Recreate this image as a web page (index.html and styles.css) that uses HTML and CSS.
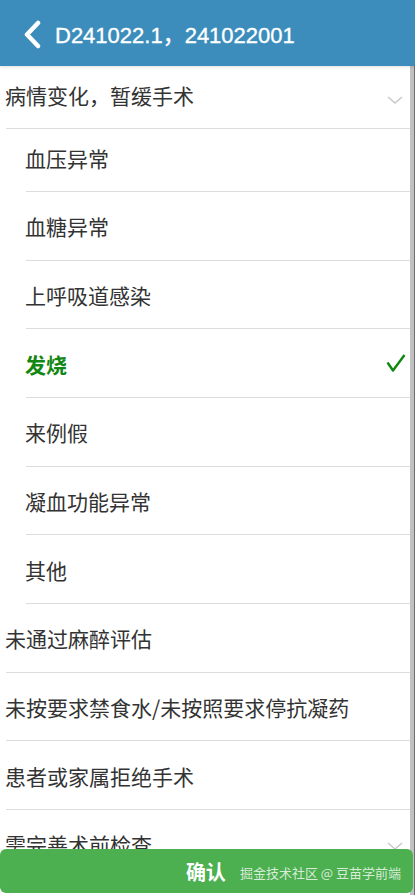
FILE: index.html
```html
<!DOCTYPE html>
<html lang="zh-CN">
<head>
<meta charset="utf-8">
<title>D241022.1，241022001</title>
<link rel="stylesheet" href="styles.css">
</head>
<body>
<header class="topbar">
  <svg class="back" width="20" height="30" viewBox="0 0 20 30"><polyline points="15,4 4,15.5 15,27" fill="none" stroke="#fff" stroke-width="4.5" stroke-linecap="round" stroke-linejoin="round"/></svg>
  <h1 class="title">D241022.1，241022001</h1>
</header>
<div class="content">
  <ul class="list">
    <li class="item group top">
      <span class="label">病情变化，暂缓手术</span>
      <svg class="chev" width="16" height="8" viewBox="0 0 16 8"><polyline points="1,1 8,7 15,1" fill="none" stroke="#c8c8c8" stroke-width="1.5"/></svg>
    </li>
    <li class="item sub short"><span class="label">血压异常</span></li>
    <li class="item sub"><span class="label">血糖异常</span></li>
    <li class="item sub"><span class="label">上呼吸道感染</span></li>
    <li class="item sub selected">
      <span class="label">发烧</span>
      <svg class="check" width="20" height="18" viewBox="0 0 20 18"><path d="M1.5 8.5 L7 16.5 L18.5 1" fill="none" stroke="#118811" stroke-width="2.4" stroke-linejoin="round"/></svg>
    </li>
    <li class="item sub"><span class="label">来例假</span></li>
    <li class="item sub"><span class="label">凝血功能异常</span></li>
    <li class="item sub"><span class="label">其他</span></li>
    <li class="item group"><span class="label">未通过麻醉评估</span></li>
    <li class="item group"><span class="label">未按要求禁食水/未按照要求停抗凝药</span></li>
    <li class="item group"><span class="label">患者或家属拒绝手术</span></li>
    <li class="item group">
      <span class="label">需完善术前检查</span>
      <svg class="chev" width="16" height="8" viewBox="0 0 16 8"><polyline points="1,1 8,7 15,1" fill="none" stroke="#c8c8c8" stroke-width="1.5"/></svg>
    </li>
  </ul>
  <div class="scrolltrack"></div>
</div>
<button class="confirm" type="button"><span class="confirm-text">确认</span><span class="watermark">掘金技术社区 @ 豆苗学前端</span></button>
</body>
</html>
```
FILE: styles.css
```css
html, body {
  margin: 0;
  padding: 0;
  height: 895px;
  overflow: hidden;
  background: #fff;
}
body {
  font-family: "Noto Sans CJK SC", "Noto Sans", sans-serif;
  color: #333;
}
.topbar {
  position: relative;
  z-index: 2;
  height: 66px;
  background: #3c8dbc;
  display: flex;
  align-items: center;
  padding-left: 23px;
  box-sizing: border-box;
  box-shadow: 0 1px 3px rgba(0,0,0,0.12);
}
.back {
  display: block;
  margin-top: 1px;
}
.title {
  margin: 0 0 0 12px;
  font-family: "Liberation Sans", Arial, "Noto Sans CJK SC", sans-serif;
  font-size: 22px;
  font-weight: normal;
  color: #fff;
  -webkit-text-stroke: 0.35px #fff;
}
.content {
  display: flex;
  height: 829px;
}
.list {
  flex: 1;
  list-style: none;
  margin: 0;
  padding: 0;
  overflow: hidden;
}
.scrolltrack {
  width: 4px;
  background: #c1c1c1;
  border-right: 1px solid #6e6e6e;
}
.item {
  display: flex;
  align-items: center;
  justify-content: space-between;
  box-sizing: border-box;
  height: 68.67px;
  padding-top: 1px;
  border-bottom: 1px solid #dcdcdc;
  font-size: 21px;
}
.item.group { margin-left: 6px; }
.item.sub { margin-left: 26px; }
.item.top, .item.short {
  height: 63px;
  padding-top: 0;
  padding-bottom: 4px;
}
.label {
  margin-left: -1px;
}
.chev {
  margin-right: 7px;
  display: block;
  margin-top: 4px;
}
.item.group.top .chev { margin-top: 10px; }
.selected .label {
  color: #128812;
  font-weight: bold;
}
.check {
  display: block;
  margin-right: 4px;
  margin-top: -2px;
}
.confirm {
  position: fixed;
  left: 0;
  right: 2px;
  bottom: 2px;
  height: 44px;
  border: none;
  border-radius: 6px;
  background: #4caf50;
  display: flex;
  align-items: center;
  justify-content: flex-end;
  padding: 0 12px 0 0;
  font-family: "Noto Sans CJK SC", sans-serif;
  z-index: 3;
}
.confirm-text {
  color: #fff;
  font-size: 20px;
  font-weight: bold;
  margin-right: 14px;
}
.watermark {
  color: rgba(255,255,255,0.78);
  font-size: 13px;
  margin-top: 2px;
}
```
